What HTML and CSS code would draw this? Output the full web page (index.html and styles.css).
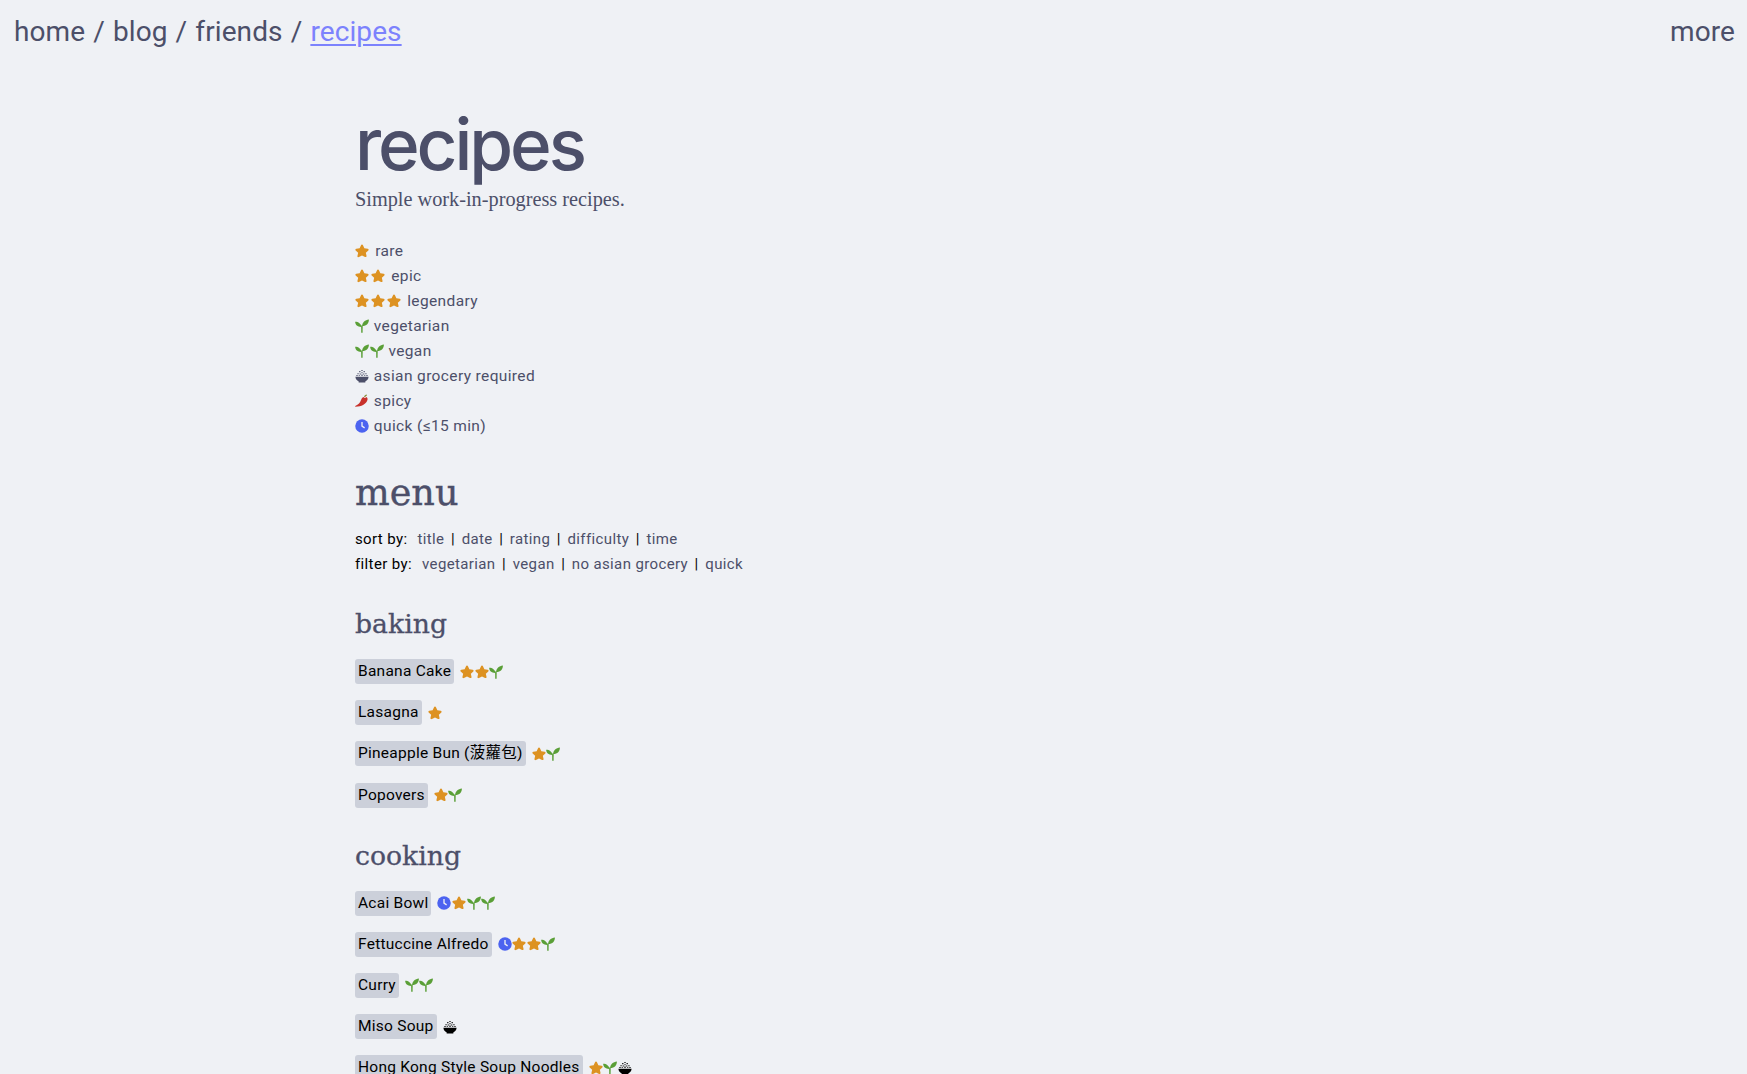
FILE: index.html
```html
<!DOCTYPE html>
<html lang="en">
<head>
    <meta charset="UTF-8">
    <meta name="viewport" content="width=device-width, initial-scale=1.0">
    <title>recipes</title>
    <link rel="stylesheet" href="styles.css">
</head>
<body>
    <svg class="sprite" width="0" height="0">
        <symbol id="star" viewBox="0 0 16 16">
            <path d="M8 .6c.5 0 .9.3 1.100.8l1.600 3.400 3.800.5c1 .1 1.400 1.300.7 2l-2.800 2.600.8 3.700c.2 1-.8 1.700-1.700 1.200L8 13.100l-3.500 1.800c-.9.5-1.900-.2-1.700-1.200l.8-3.700L.8 7.300c-.7-.7-.3-1.900.7-2l3.800-.5 1.600-3.400C7.100.9 7.500.6 8 .6z" fill="#dd9222"/>
        </symbol>
        <symbol id="leaf" viewBox="0 0 16 16">
            <path d="M7.400 9C7 5.400 4 3.100.2 3.100.2 6.600 3 9.200 7.400 9z" fill="#5a9f37"/>
            <path d="M8.100 8C8.300 3.900 11.500.9 15.900.5 15.900 4.800 13.100 8.100 8.100 8z" fill="#5a9f37"/>
            <path d="M7 7.500h1.800l-.1 8.200H7.100z" fill="#5a9f37"/>
        </symbol>
        <symbol id="bowl" viewBox="0 0 16 16">
            <path d="M.5 8.800h15c0 2.500-1.500 4.300-3.600 5.200v.8c0 .4-.3.7-.7.7H4.800c-.4 0-.7-.3-.7-.7V14C2 13.100.5 11.300.5 8.800z" fill="currentColor"/>
            <path d="M7.300 1h1.400v1.200H7.300zM4.800 2.400h1.400v1.200H4.800zM9.800 2.400h1.400v1.200H9.800zM7.300 3.600h1.400v1.200H7.300zM2.800 4.800h1.400V6H2.800zM5.300 5.200h1.400v1.200H5.300zM9.300 5.200h1.400v1.200H9.300zM11.800 4.800h1.400V6h-1.400zM1.600 6.800H3V8H1.600zM4.200 7h1.400v1.100H4.200zM7.300 6.400h1.400v1.600H7.300zM10.400 7h1.400v1.100h-1.400zM13 6.800h1.400V8H13z" fill="currentColor"/>
        </symbol>
        <symbol id="chili" viewBox="0 0 16 16">
            <path d="M13.200 3.400c1.300.9 1.500 2.600.7 4.300C12.300 11.400 7.500 14.500.6 14.500c-.5 0-.7-.5-.3-.8 3.700-1.500 5.600-3.900 6.700-7.100.5-1.600 1.300-2.800 2.800-3.300.5 1.300 1.900 1.500 3.400.1z" fill="#c8312b"/>
            <path d="M10.300 3.100C10.700 1.900 11.800 1 13.400.6l.4 1.100c-1 .3-1.700.9-2 1.700-.6.3-1.100.1-1.500-.3z" fill="#8a8f3c"/>
        </symbol>
        <symbol id="clock" viewBox="0 0 16 16">
            <circle cx="8" cy="8" r="7.700" fill="#4c63f0"/>
            <path d="M8 3.500v4.700l3 1.900" fill="none" stroke="#eff1f5" stroke-width="1.500"/>
        </symbol>
    </svg>

    <nav class="topnav">
        <div class="crumbs">
            <a href="#">home</a> / <a href="#">blog</a> / <a href="#">friends</a> / <a class="current" href="#">recipes</a>
        </div>
        <a href="#">more</a>
    </nav>

    <main class="content">
        <h1>recipes</h1>
        <p class="subtitle">Simple work-in-progress recipes.</p>

        <ul class="legend">
            <li><span class="icons spaced"><svg><use href="#star"/></svg></span> rare</li>
            <li><span class="icons spaced"><svg><use href="#star"/></svg><svg><use href="#star"/></svg></span> epic</li>
            <li><span class="icons spaced"><svg><use href="#star"/></svg><svg><use href="#star"/></svg><svg><use href="#star"/></svg></span> legendary</li>
            <li><span class="icons"><svg><use href="#leaf"/></svg></span> vegetarian</li>
            <li><span class="icons"><svg><use href="#leaf"/></svg><svg><use href="#leaf"/></svg></span> vegan</li>
            <li><span class="icons"><svg class="muted"><use href="#bowl"/></svg></span> asian grocery required</li>
            <li><span class="icons"><svg><use href="#chili"/></svg></span> spicy</li>
            <li><span class="icons"><svg><use href="#clock"/></svg></span> quick (≤15 min)</li>
        </ul>

        <h2>menu</h2>
        <div class="controls">
            <div>sort by: <a href="#">title</a> | <a href="#">date</a> | <a href="#">rating</a> | <a href="#">difficulty</a> | <a href="#">time</a></div>
            <div>filter by: <a href="#">vegetarian</a> | <a href="#">vegan</a> | <a href="#">no asian grocery</a> | <a href="#">quick</a></div>
        </div>

        <h3>baking</h3>
        <ul class="recipes">
            <li><a class="chip" href="#">Banana Cake</a><span class="icons"><svg><use href="#star"/></svg><svg><use href="#star"/></svg><svg><use href="#leaf"/></svg></span></li>
            <li><a class="chip" href="#">Lasagna</a><span class="icons"><svg><use href="#star"/></svg></span></li>
            <li><a class="chip" href="#">Pineapple Bun (菠蘿包)</a><span class="icons"><svg><use href="#star"/></svg><svg><use href="#leaf"/></svg></span></li>
            <li><a class="chip" href="#">Popovers</a><span class="icons"><svg><use href="#star"/></svg><svg><use href="#leaf"/></svg></span></li>
        </ul>

        <h3>cooking</h3>
        <ul class="recipes">
            <li><a class="chip" href="#">Acai Bowl</a><span class="icons"><svg><use href="#clock"/></svg><svg><use href="#star"/></svg><svg><use href="#leaf"/></svg><svg><use href="#leaf"/></svg></span></li>
            <li><a class="chip" href="#">Fettuccine Alfredo</a><span class="icons"><svg><use href="#clock"/></svg><svg><use href="#star"/></svg><svg><use href="#star"/></svg><svg><use href="#leaf"/></svg></span></li>
            <li><a class="chip" href="#">Curry</a><span class="icons"><svg><use href="#leaf"/></svg><svg><use href="#leaf"/></svg></span></li>
            <li><a class="chip" href="#">Miso Soup</a><span class="icons"><svg class="dark"><use href="#bowl"/></svg></span></li>
            <li><a class="chip" href="#">Hong Kong Style Soup Noodles</a><span class="icons"><svg><use href="#star"/></svg><svg><use href="#leaf"/></svg><svg class="dark"><use href="#bowl"/></svg></span></li>
        </ul>
    </main>
</body>
</html>
```

FILE: styles.css
```css
html {
    height: 100%;
    overflow: hidden;
}
body {
    margin: 0;
    height: 100%;
    overflow: hidden;
    background-color: #eff1f5;
    color: #4c4f69;
    font-family: Roboto, "Noto Sans CJK TC", sans-serif;
    font-size: 15.5px;
    letter-spacing: 0.37px;
}
a {
    color: inherit;
    text-decoration: none;
}
ul {
    list-style: none;
    margin: 0;
    padding: 0;
}
.sprite {
    display: block;
    height: 0;
}
.topnav {
    display: flex;
    justify-content: space-between;
    padding: 15px 12px 0 14px;
    font-size: 28px;
    line-height: 34px;
    letter-spacing: 0.1px;
    word-spacing: 1px;
}
.current {
    color: #7c82fd;
    text-decoration: underline;
    text-underline-offset: 3px;
    text-decoration-thickness: 1.5px;
}
.content {
    margin-left: 355px;
    padding-top: 57px;
}
h1 {
    margin: 0;
    font-family: Inter, "Liberation Sans", sans-serif;
    font-size: 71px;
    font-weight: 500;
    line-height: 76px;
    letter-spacing: -3.1px;
}
.subtitle {
    margin: 3px 0 0;
    font-family: "Liberation Serif", serif;
    font-size: 20.3px;
    line-height: 28px;
    letter-spacing: 0;
}
.legend {
    margin-top: 26px;
    line-height: 25px;
}
.legend .icons {
    margin-left: 0;
    margin-right: 0;
}
.icons {
    display: inline-flex;
    align-items: center;
    margin-left: 6px;
    vertical-align: -2px;
}
.icons svg {
    display: block;
    width: 14px;
    height: 14px;
    margin-right: 0.6px;
}
.icons.spaced svg {
    margin-right: 2px;
}
.muted {
    color: #4c4f69;
}
.dark {
    color: #000;
}
h2 {
    margin: 29px 0 0;
    font-family: "DejaVu Serif", serif;
    font-size: 36.6px;
    font-weight: 400;
    line-height: 50px;
    letter-spacing: 0;
    -webkit-text-stroke: 0.4px #4c4f69;
}
.controls {
    margin-top: 9px;
    color: #000;
    line-height: 24.5px;
    font-size: 15px;
}
.controls a {
    color: #4c4f69;
    margin: 0 2.5px;
}
.controls a:first-child {
    margin-left: 6px;
}
h3 {
    margin: 26px 0 0;
    font-family: "DejaVu Serif", serif;
    font-size: 26.7px;
    font-weight: 400;
    line-height: 44px;
    letter-spacing: 0;
    -webkit-text-stroke: 0.3px #4c4f69;
}
.recipes {
    margin-top: 13px;
}
.recipes li {
    display: flex;
    align-items: center;
    height: 25px;
    margin-bottom: 16.2px;
}
.chip {
    padding: 0 3px;
    background-color: #ccd0da;
    border-radius: 3px;
    color: #000;
    line-height: 25px;
    letter-spacing: 0.25px;
}
```
